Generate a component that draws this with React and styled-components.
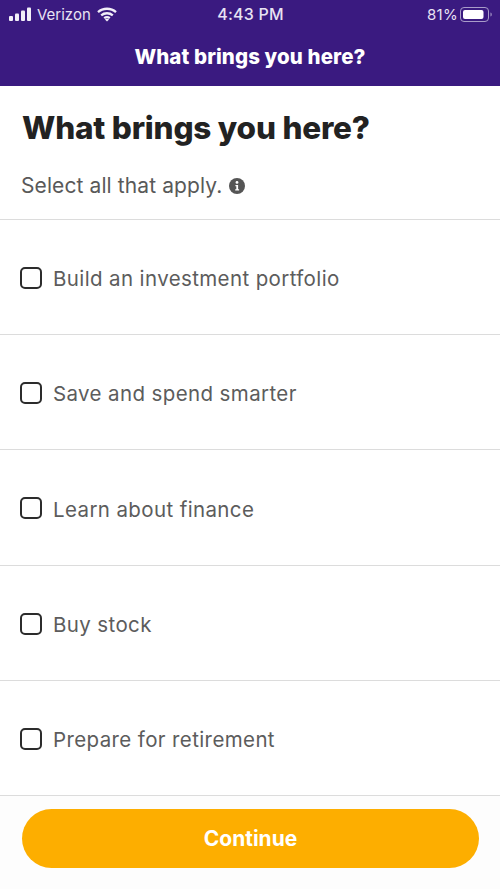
import React from 'react';
import styled, { createGlobalStyle } from 'styled-components';

const GlobalStyle = createGlobalStyle`
  html, body {
    margin: 0;
    padding: 0;
    background: #fff;
  }
  * {
    box-sizing: border-box;
  }
`;

const Page = styled.div`
  width: 500px;
  height: 889px;
  display: flex;
  flex-direction: column;
  overflow: hidden;
  background: #fff;
  font-family: Inter, "Liberation Sans", sans-serif;
`;

const TopBar = styled.header`
  height: 86px;
  flex: none;
  background: #3a1a80;
  color: #fff;
`;

const StatusBar = styled.div`
  height: 28px;
  padding: 0 8px 0 9px;
  display: grid;
  grid-template-columns: 1fr auto 1fr;
  align-items: center;
  font-size: 15px;
  color: #e8e3f3;
`;

const StatusLeft = styled.div`
  display: flex;
  align-items: center;
  gap: 5px;
`;

const WifiSlot = styled.span`
  display: flex;
  margin-left: 1px;
`;

const StatusRight = styled.div`
  display: flex;
  align-items: center;
  justify-content: flex-end;
  gap: 2px;
  letter-spacing: 0.3px;
`;

const Time = styled.div`
  font-size: 16px;
  font-weight: 500;
  letter-spacing: 0.2px;
`;

const NavTitle = styled.div`
  height: 57px;
  display: flex;
  align-items: center;
  justify-content: center;
  font-size: 20.5px;
  font-weight: 800;
  letter-spacing: 0.1px;
`;

const Intro = styled.section`
  height: 134px;
  flex: none;
  padding: 22px 21px 0 22px;
  border-bottom: 1px solid #dcdcdc;
`;

const Heading = styled.h1`
  margin: 0;
  font-size: 31.5px;
  line-height: 40px;
  font-weight: 800;
  letter-spacing: -0.2px;
  color: #222;
`;

const Hint = styled.p`
  margin: 26px 0 0 -1px;
  display: flex;
  align-items: center;
  gap: 7px;
  font-size: 21px;
  line-height: 24px;
  letter-spacing: 0.1px;
  color: #595959;
`;

const Option = styled.label`
  height: ${(p) => p.$height}px;
  flex: none;
  padding: 1px 21px 0 20px;
  display: flex;
  align-items: center;
  gap: 11px;
  border-bottom: 1px solid #dcdcdc;
`;

const Box = styled.span`
  width: 22px;
  height: 22px;
  flex: none;
  border: 2px solid #2c2c2c;
  border-radius: 5px;
`;

const OptionLabel = styled.span`
  padding-top: 2px;
  font-size: 20.5px;
  letter-spacing: 0.38px;
  color: #5c5c5c;
`;

const Footer = styled.footer`
  flex: 1;
  padding: 13px 21px 0 22px;
  background: #fdfdfd;
`;

const ContinueButton = styled.button`
  width: 100%;
  height: 59px;
  border: none;
  border-radius: 30px;
  background: #fdae00;
  color: #fff;
  font-family: inherit;
  font-size: 21px;
  font-weight: 700;
`;

const options = [
  { label: 'Build an investment portfolio', height: 115 },
  { label: 'Save and spend smarter', height: 115 },
  { label: 'Learn about finance', height: 116 },
  { label: 'Buy stock', height: 115 },
  { label: 'Prepare for retirement', height: 115 },
];

const SignalIcon = () => (
  <svg width="23" height="15" viewBox="0 0 23 15" fill="#f2eff8">
    <rect x="0" y="9" width="4" height="5" rx="1" />
    <rect x="6" y="6.5" width="4" height="7.5" rx="1" />
    <rect x="12" y="3.5" width="4" height="10.5" rx="1" />
    <rect x="18" y="0.5" width="4" height="13.5" rx="1" />
  </svg>
);

const WifiIcon = () => (
  <svg width="20" height="15" viewBox="0 0 20 15" fill="none" stroke="#f2eff8" strokeWidth="2.3">
    <path d="M1 5.2C6 .6 14 .6 19 5.2" />
    <path d="M4.2 8.4c3.3-2.9 8.3-2.9 11.6 0" />
    <path d="M7.2 11.2c1.6-1.3 4-1.3 5.6 0" />
    <path d="M10 14.6 7.9 12.4c1.2-.9 3-.9 4.2 0z" fill="#f2eff8" stroke="none" />
  </svg>
);

const BatteryIcon = () => (
  <svg width="32" height="15" viewBox="0 0 32 15" fill="none">
    <rect x="0.5" y="0.5" width="28" height="14" rx="3.5" stroke="#a99cc9" />
    <rect x="3" y="3" width="20.5" height="9" rx="2" fill="#fff" />
    <path d="M30.5 5.500c.9.3 1.200 1.100 1.200 2s-.3 1.700-1.200 2z" fill="#a99cc9" />
  </svg>
);

const InfoIcon = () => (
  <svg width="16" height="16" viewBox="0 0 16 16">
    <circle cx="8" cy="8" r="8" fill="#555" />
    <circle cx="8" cy="4.4" r="1.4" fill="#fff" />
    <path d="M6.4 7h2.7v4.3h1v1.300H6.200v-1.300h1.100V8.300H6.400z" fill="#fff" />
  </svg>
);

const App = () => (
  <Page>
    <GlobalStyle />
    <TopBar>
      <StatusBar>
        <StatusLeft>
          <SignalIcon />
          <span>Verizon</span>
          <WifiSlot>
            <WifiIcon />
          </WifiSlot>
        </StatusLeft>
        <Time>4:43 PM</Time>
        <StatusRight>
          <span>81%</span>
          <BatteryIcon />
        </StatusRight>
      </StatusBar>
      <NavTitle>What brings you here?</NavTitle>
    </TopBar>
    <Intro>
      <Heading>What brings you here?</Heading>
      <Hint>
        Select all that apply.
        <InfoIcon />
      </Hint>
    </Intro>
    {options.map((option) => (
      <Option key={option.label} $height={option.height}>
        <Box />
        <OptionLabel>{option.label}</OptionLabel>
      </Option>
    ))}
    <Footer>
      <ContinueButton>Continue</ContinueButton>
    </Footer>
  </Page>
);

export default App;
